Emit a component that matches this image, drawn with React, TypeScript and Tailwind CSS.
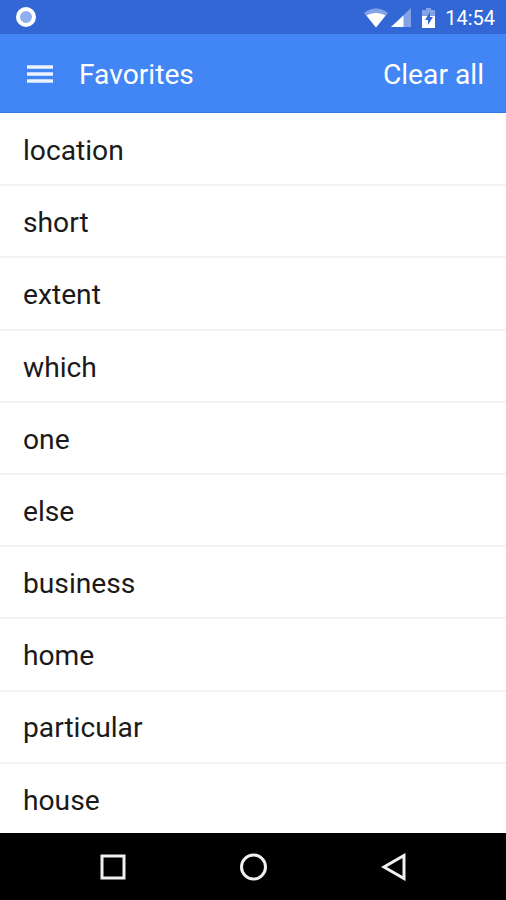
const favorites = [
  'location',
  'short',
  'extent',
  'which',
  'one',
  'else',
  'business',
  'home',
  'particular',
  'house',
];

function StatusBar() {
  return (
    <div className="flex h-[34px] shrink-0 items-center justify-between bg-[#3367d6] pl-[15px] pr-[11px]">
      <svg width="22" height="22" viewBox="0 0 22 22">
        <circle cx="11" cy="11" r="8" fill="#8fb0f0" stroke="#fff" strokeWidth="4" />
      </svg>
      <div className="flex items-center text-white">
        {/* wifi, signal and battery, each on its faded background shape */}
        <svg width="74" height="24" viewBox="0 0 74 24" className="mr-[7px] mt-[2px]">
          <path d="M0 7C7 1 17 1 24 7L12 21.500z" fill="#fff" fillOpacity=".4" />
          <path d="M2.500 9.500C8 6 16 6 21.500 9.500L12 21.500z" fill="#fff" />
          <path d="M47 2v19H27z" fill="#fff" fillOpacity=".4" />
          <path d="M39.500 9.500V21H27z" fill="#fff" />
          <path d="M58 4h4V2h5v2h4v7H58z" fill="#fff" fillOpacity=".4" />
          <path d="M58 10h13v12H58z" fill="#fff" />
          <path d="M66 6l-5 8h3v5l5-8h-3z" fill="#3367d6" />
        </svg>
        <span className="pt-[2px] text-[20px] leading-none">14:54</span>
      </div>
    </div>
  );
}

export default function App() {
  return (
    <div className="flex h-[900px] w-[506px] flex-col bg-white font-['Roboto',sans-serif]">
      <StatusBar />
      <header className="flex h-[79px] shrink-0 items-center border-b border-[#2f78e0] bg-[#4285f4] px-[22px] text-[28.200px] text-white">
        <button aria-label="Menu" className="mr-[23px] pt-px">
          <svg width="34" height="24" viewBox="0 0 34 24">
            <path d="M5 5h26M5 12h26M5 19h26" stroke="#edf2fe" strokeWidth="3.500" />
          </svg>
        </button>
        <h1 className="pt-[4px]">Favorites</h1>
        <button className="ml-auto pt-[4px]">Clear all</button>
      </header>

      <ul className="h-[720px] shrink-0 overflow-hidden pt-px">
        {favorites.map((word) => (
          <li key={word} className="flex h-[72.200px] items-center border-b-2 border-[#f4f4f4] pl-[23px] pt-[4px] text-[28.200px] text-[#1a1a1a]">
            {word}
          </li>
        ))}
      </ul>

      <nav className="flex h-[67px] shrink-0 items-center justify-center gap-[112px] bg-black">
        <svg width="28" height="28" viewBox="0 0 28 28" fill="none" stroke="#f0f0f0" strokeWidth="3">
          <rect x="3" y="3" width="22" height="22" />
        </svg>
        <svg width="28" height="28" viewBox="0 0 28 28" fill="none" stroke="#f0f0f0" strokeWidth="3">
          <circle cx="14.500" cy="14" r="12" />
        </svg>
        <svg width="28" height="28" viewBox="0 0 28 28" fill="none" stroke="#f0f0f0" strokeWidth="3">
          <path d="M25 2.500v23L5 14z" />
        </svg>
      </nav>
    </div>
  );
}
